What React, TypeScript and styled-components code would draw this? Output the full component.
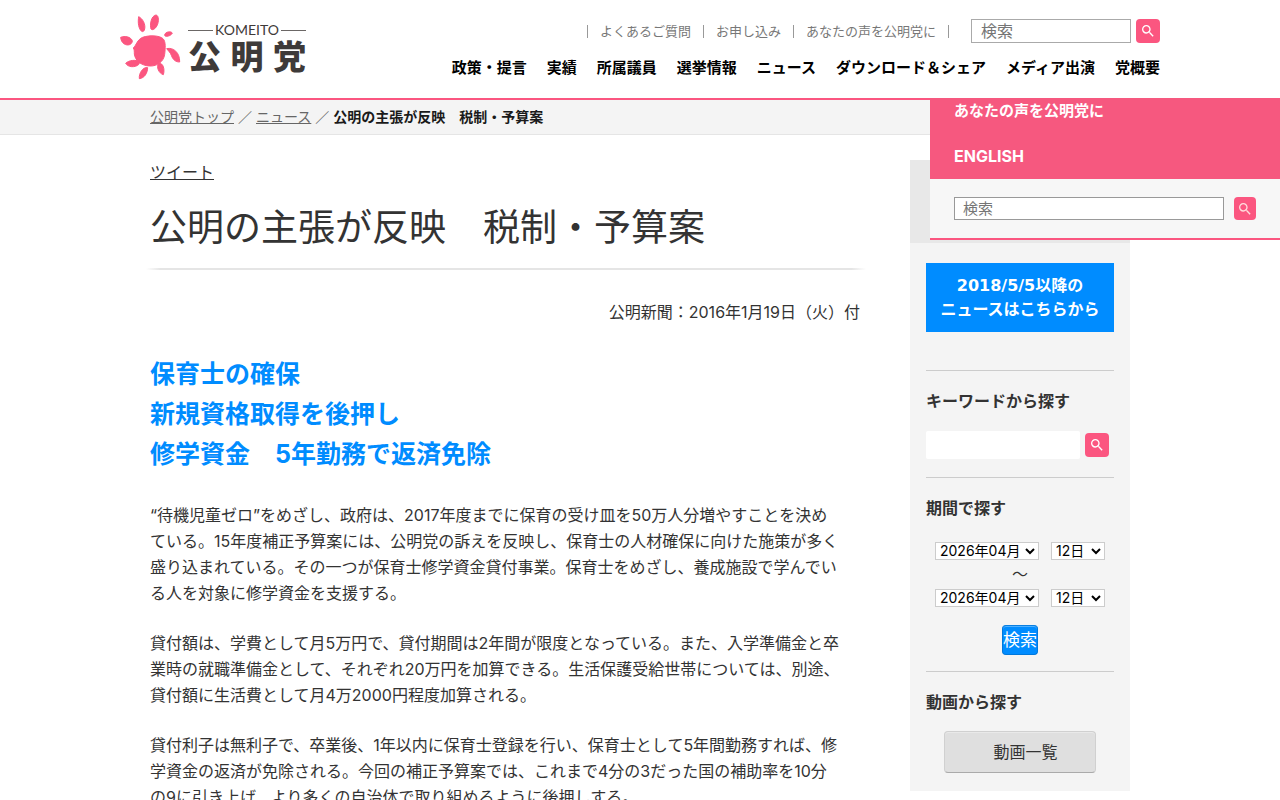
import React from "react";
import styled, { createGlobalStyle } from "styled-components";
import { MdSearch } from "react-icons/md";

const PINK = "#fb5680";
const BLUE = "#008cff";

const GlobalStyle = createGlobalStyle`
  *, *::before, *::after { box-sizing: border-box; }
  body {
    margin: 0;
    background: #fff;
    color: #333;
    font-family: Inter, "Noto Sans CJK JP", sans-serif;
    font-size: 16px;
    line-height: 26px;
  }
  h1, h2, h3, p, ul, ol { margin: 0; padding: 0; }
  ul, ol { list-style: none; }
  a { color: inherit; }
  button, input, select { font-family: inherit; }
  button { cursor: pointer; padding: 0; }
`;

const Header = styled.header`
  border-bottom: 2px solid ${PINK};
  background: #fff;
`;

const HeaderInner = styled.div`
  display: flex;
  justify-content: space-between;
  max-width: 1040px;
  min-height: 98px;
  margin: 0 auto;
`;

const Logo = styled.a`
  display: flex;
  align-items: flex-start;
  gap: 7px;
  padding-top: 14px;
  color: #3e3a39;
  text-decoration: none;
`;

const LogoWords = styled.span`
  display: flex;
  flex-direction: column;
  width: 118px;
  padding-top: 8px;
`;

const LogoLatin = styled.span`
  display: flex;
  align-items: center;
  gap: 2px;
  font-family: Lato, sans-serif;
  font-size: 14px;
  line-height: 16px;

  &::before, &::after {
    content: "";
    flex: 1;
    height: 1px;
    background: #6b6766;
  }
`;

const LogoKanji = styled.span`
  display: flex;
  justify-content: space-between;
  font-size: 33px;
  font-weight: 900;
  line-height: 38px;
`;

const HeaderMenus = styled.div`
  display: flex;
  flex-direction: column;
  align-items: flex-end;
  gap: 12px;
  padding-top: 19px;
`;

const UtilityRow = styled.div`
  display: flex;
  align-items: center;
  gap: 22px;
`;

const UtilityList = styled.ul`
  display: flex;
  border-right: 1px solid #999;
  font-size: 13px;
  line-height: 13px;
  color: #777;

  li { border-left: 1px solid #999; padding: 0 12px; }
  a { text-decoration: none; }
`;

const SearchForm = styled.form<{ $gap: number }>`
  display: flex;
  align-items: center;
  gap: ${(p) => p.$gap}px;
`;

const SearchBox = styled.input<{ $size: number }>`
  width: 160px;
  height: 24px;
  border: 1px solid #aaa;
  border-radius: 0;
  padding: 0 9px;
  background: #fff;
  font-size: ${(p) => p.$size}px;

  &::placeholder { color: #757575; }
`;

const SearchButton = styled.button`
  display: flex;
  align-items: center;
  justify-content: center;
  width: 24px;
  height: 24px;
  border: 0;
  border-radius: 4px;
  background: ${PINK};
  color: #fff;
  font-size: 16px;
`;

const GlobalNav = styled.ul`
  display: flex;
  gap: 20px;
  color: #000;
  font-size: 15px;
  font-weight: 700;

  a { text-decoration: none; white-space: nowrap; }
`;

const Drawer = styled.aside`
  position: absolute;
  top: 98px;
  right: 0;
  z-index: 2;
  width: 350px;
  border-bottom: 2px solid ${PINK};
  background: #f7f7f7;
`;

const DrawerLinks = styled.ul`
  display: flex;
  flex-direction: column;
  gap: 19px;
  padding: 0 24px 10px;
  background: #f6587f;
  color: #fff;
  font-size: 15px;
  font-weight: 700;

  a { text-decoration: none; }
`;

const EnglishLink = styled.a`
  display: block;
  font-size: 16px;
  font-weight: 700;
`;

const DrawerSearch = styled(SearchForm)`
  padding: 18px 24px;

  ${SearchBox} { flex: 1; height: 23px; border-color: #999; padding: 0 8px; }
  ${SearchButton} { width: 22px; height: 23px; color: #fdd; }
`;

const Breadcrumb = styled.nav`
  border-bottom: 1px solid #e5e5e5;
  background: #f4f4f4;
  font-size: 14px;
  line-height: 34px;
  color: #666;
`;

const BreadcrumbList = styled.ol`
  display: flex;
  gap: 4px;
  max-width: 980px;
  margin: 0 auto;

  strong { color: #1a1a1a; }
`;

const Page = styled.div`
  display: flex;
  align-items: flex-start;
  gap: 50px;
  max-width: 980px;
  margin: 0 auto;
  padding-top: 24px;
`;

const Article = styled.main`
  flex: 1;
  min-width: 0;
`;

const Title = styled.h1`
  margin-top: 17px;
  font-size: 37px;
  font-weight: 400;
  line-height: 52px;
`;

const TitleRule = styled.div`
  height: 2px;
  margin: 14px -6px 0 -4px;
  background: linear-gradient(90deg, #fff, #e5e5e5 2%, #e5e5e5 98%, #fff);
`;

const PublishedDate = styled.p`
  margin-top: 29px;
  text-align: right;
`;

const Lead = styled.h2`
  margin: 29px 0 28px;
  color: ${BLUE};
  font-size: 25px;
  font-weight: 700;
  line-height: 40px;
`;

const Paragraph = styled.p`
  margin-bottom: 24px;
  color: #333;
`;

const Sidebar = styled.aside`
  width: 220px;
  margin-top: 1px;
  padding-bottom: 18px;
  background: #f4f4f4;
`;

const SidebarTop = styled.div`
  height: 83px;
  background: #e8e8e8;
`;

const Banner = styled.a`
  display: block;
  margin: 20px 16px 38px;
  padding: 11px 0 10px;
  background: ${BLUE};
  color: #fff;
  font-family: "DejaVu Sans", "Noto Sans CJK JP", sans-serif;
  font-size: 16px;
  font-weight: 700;
  line-height: 24px;
  text-align: center;
  text-decoration: none;
`;

const SideSection = styled.section`
  margin: 0 16px;
  padding-top: 17px;
  border-top: 1px solid #ccc;
`;

const SideHeading = styled.h3`
  font-size: 16px;
  font-weight: 700;
  line-height: 26px;
`;

const KeywordForm = styled(SearchForm)`
  margin: 17px 0 18px;

  ${SearchBox} { width: 154px; height: 28px; border: 0; border-radius: 2px; }
`;

const PeriodForm = styled.form`
  display: flex;
  flex-direction: column;
  align-items: center;
  margin: 21px 0 16px;
`;

const DateRow = styled.div`
  display: flex;
  gap: 12px;
`;

const DateField = styled.span<{ $wide?: boolean }>`
  position: relative;
  display: flex;
  width: ${(p) => (p.$wide ? 104 : 54)}px;

  svg {
    position: absolute;
    top: 6px;
    right: 4px;
    pointer-events: none;
  }
`;

const DateSelect = styled.select`
  appearance: none;
  width: 100%;
  height: 18px;
  border: 1px solid #ccc;
  border-radius: 0;
  padding: 0 0 0 4px;
  background-color: #fff;
  color: #000;
  font-size: 14px;
  line-height: 16px;
`;

const Tilde = styled.span`
  line-height: 29px;
`;

const SubmitButton = styled.button`
  width: 36px;
  height: 30px;
  margin-top: 18px;
  border: 1px solid #0078dc;
  border-top-color: #0a7fe0;
  border-radius: 4px;
  background: ${BLUE};
  box-shadow: inset 0 1px 0 #4fb0ff;
  color: #fff;
  font-size: 17px;
  line-height: 26px;
  white-space: nowrap;
`;

const MovieLink = styled.a`
  display: block;
  margin: 16px 18px 0;
  padding: 7px 0 7px 11px;
  border: 1px solid #d0d0d0;
  border-bottom-color: #aaa;
  border-radius: 4px;
  background: #dfdfdf;
  box-shadow: inset 0 1px 0 #e9e9e9;
  text-align: center;
  text-decoration: none;
`;

const SunMark = () => (
  <svg
    width="61"
    height="66"
    viewBox="29 27 183 198"
    fill={PINK}
    stroke={PINK}
    strokeWidth="3"
    strokeLinejoin="round"
    aria-hidden="true"
  >
    <path d="M69 129C78 121 80 104 97 97c20-7 50-6 61 4 9 9 7 29 5 47-3 22-22 36-45 35-26-1-44-17-46-36 0-8 0-13-3-18Z" />
    <path d="M85 35c12 6 21 22 18 37-2 9-8 10-12 4-8-11-8-28-6-41Z" />
    <path d="M137 30c9 1 9 21 3 32-5 10-15 15-18 10-4-12 0-40 15-42Z" />
    <path d="M186 84c-5-6-20-4-23 5-2 9 19 5 23-5Z" />
    <path d="M169 131c20-5 40 12 39 40-12 0-20-6-25-20-3-9-8-12-14-20Z" />
    <path d="M145 175c-8 10 0 30 14 34 5-15 0-36-14-34Z" />
    <path d="M112 188c-14-3-27 17-25 33 15-2 24-15 25-33Z" />
    <path d="M46 175c10-10 31-11 39-6 8 9-8 17-21 16-9-1-14-4-18-10Z" />
    <path d="M31 97c12-5 31-2 35 11-1 13-16 14-24 9-8-5-10-12-11-20Z" />
  </svg>
);

const NAV = ["政策・提言", "実績", "所属議員", "選挙情報", "ニュース", "ダウンロード＆シェア", "メディア出演", "党概要"];
const UTILITY = ["よくあるご質問", "お申し込み", "あなたの声を公明党に"];

const PARAGRAPHS = [
  [
    "“待機児童ゼロ”をめざし、政府は、2017年度までに保育の受け皿を50万人分増やすことを決め",
    "ている。15年度補正予算案には、公明党の訴えを反映し、保育士の人材確保に向けた施策が多く",
    "盛り込まれている。その一つが保育士修学資金貸付事業。保育士をめざし、養成施設で学んでい",
    "る人を対象に修学資金を支援する。",
  ],
  [
    "貸付額は、学費として月5万円で、貸付期間は2年間が限度となっている。また、入学準備金と卒",
    "業時の就職準備金として、それぞれ20万円を加算できる。生活保護受給世帯については、別途、",
    "貸付額に生活費として月4万2000円程度加算される。",
  ],
  [
    "貸付利子は無利子で、卒業後、1年以内に保育士登録を行い、保育士として5年間勤務すれば、修",
    "学資金の返済が免除される。今回の補正予算案では、これまで4分の3だった国の補助率を10分",
    "の9に引き上げ、より多くの自治体で取り組めるように後押しする。",
  ],
];

const Lines = ({ lines }: { lines: string[] }) => (
  <>
    {lines.map((line, i) => (
      <React.Fragment key={line}>
        {i > 0 && <br />}
        {line}
      </React.Fragment>
    ))}
  </>
);

const SearchSubmit = () => (
  <SearchButton type="button" aria-label="検索">
    <MdSearch />
  </SearchButton>
);

const Chevron = () => (
  <svg width="10" height="7" viewBox="0 0 10 7" fill="none" stroke="#000" strokeWidth="2" aria-hidden="true">
    <path d="M1 1l4 4 4-4" />
  </svg>
);

const DateFields = ({ label }: { label: string }) => (
  <DateRow>
    <DateField $wide>
      <DateSelect aria-label={`${label}年月`}>
        <option>2026年04月</option>
      </DateSelect>
      <Chevron />
    </DateField>
    <DateField>
      <DateSelect aria-label={`${label}日`}>
        <option>12日</option>
      </DateSelect>
      <Chevron />
    </DateField>
  </DateRow>
);

export default function App() {
  return (
    <>
      <GlobalStyle />
      <Header>
        <HeaderInner>
          <Logo href="#">
            <SunMark />
            <LogoWords>
              <LogoLatin>KOMEITO</LogoLatin>
              <LogoKanji>
                <span>公</span>
                <span>明</span>
                <span>党</span>
              </LogoKanji>
            </LogoWords>
          </Logo>
          <HeaderMenus>
            <UtilityRow>
              <UtilityList>
                {UTILITY.map((t) => (
                  <li key={t}>
                    <a href="#">{t}</a>
                  </li>
                ))}
              </UtilityList>
              <SearchForm $gap={5}>
                <SearchBox $size={16} type="text" placeholder="検索" aria-label="検索" />
                <SearchSubmit />
              </SearchForm>
            </UtilityRow>
            <nav>
              <GlobalNav>
                {NAV.map((t) => (
                  <li key={t}>
                    <a href="#">{t}</a>
                  </li>
                ))}
              </GlobalNav>
            </nav>
          </HeaderMenus>
        </HeaderInner>
      </Header>

      <Drawer>
        <DrawerLinks>
          <li>
            <a href="#">あなたの声を公明党に</a>
          </li>
          <li>
            <EnglishLink href="#">ENGLISH</EnglishLink>
          </li>
        </DrawerLinks>
        <DrawerSearch $gap={10}>
          <SearchBox $size={15} type="text" placeholder="検索" aria-label="検索" />
          <SearchSubmit />
        </DrawerSearch>
      </Drawer>

      <Breadcrumb>
        <BreadcrumbList>
          <li>
            <a href="#">公明党トップ</a>
          </li>
          <li>／</li>
          <li>
            <a href="#">ニュース</a>
          </li>
          <li>／</li>
          <li>
            <strong>公明の主張が反映　税制・予算案</strong>
          </li>
        </BreadcrumbList>
      </Breadcrumb>

      <Page>
        <Article>
          <a href="#">ツイート</a>
          <Title>公明の主張が反映　税制・予算案</Title>
          <TitleRule />
          <PublishedDate>公明新聞：2016年1月19日（火）付</PublishedDate>
          <Lead>
            <Lines lines={["保育士の確保", "新規資格取得を後押し", "修学資金　5年勤務で返済免除"]} />
          </Lead>
          {PARAGRAPHS.map((lines) => (
            <Paragraph key={lines[0]}>
              <Lines lines={lines} />
            </Paragraph>
          ))}
        </Article>

        <Sidebar>
          <SidebarTop />
          <Banner href="#">
            2018/5/5以降の
            <br />
            ニュースはこちらから
          </Banner>
          <SideSection>
            <SideHeading>キーワードから探す</SideHeading>
            <KeywordForm $gap={5}>
              <SearchBox $size={16} type="text" aria-label="キーワード" />
              <SearchSubmit />
            </KeywordForm>
          </SideSection>
          <SideSection>
            <SideHeading>期間で探す</SideHeading>
            <PeriodForm>
              <DateFields label="開始" />
              <Tilde>～</Tilde>
              <DateFields label="終了" />
              <SubmitButton type="button">検索</SubmitButton>
            </PeriodForm>
          </SideSection>
          <SideSection>
            <SideHeading>動画から探す</SideHeading>
            <MovieLink href="#">動画一覧</MovieLink>
          </SideSection>
        </Sidebar>
      </Page>
    </>
  );
}
